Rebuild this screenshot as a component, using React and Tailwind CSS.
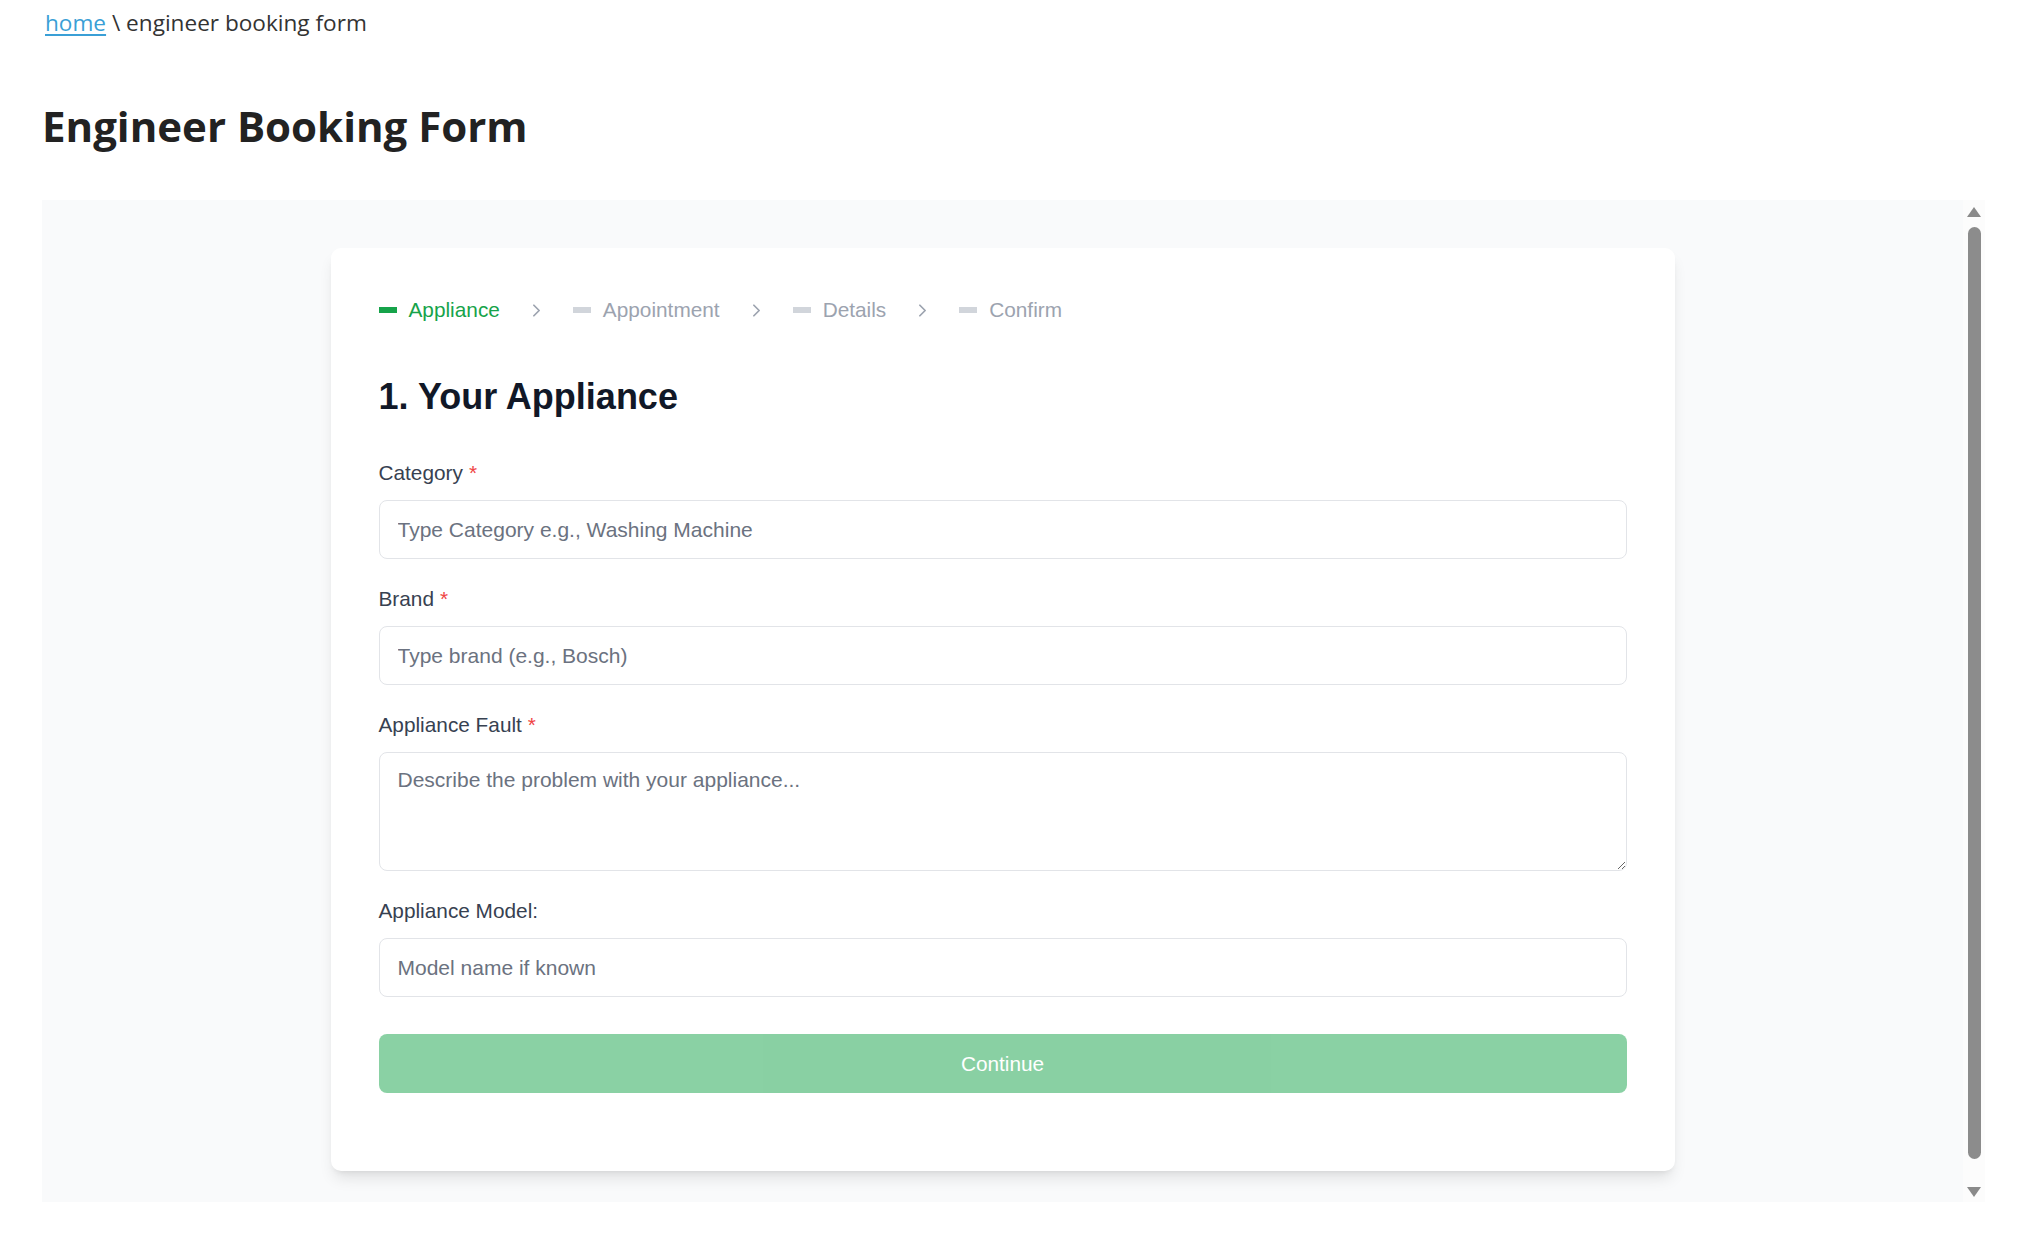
import React from "react";

function Chevron() {
  return (
    <svg width="21" height="21" viewBox="0 0 24 24" fill="none" stroke="#9ca3af" strokeWidth="2" strokeLinecap="round" strokeLinejoin="round">
      <path d="m9 18 6-6-6-6" />
    </svg>
  );
}

function Step({ label, active }) {
  return (
    <div className="flex items-center gap-[12px]">
      <span className={active ? "block w-[18px] h-[6px] bg-[#16a34a]" : "block w-[18px] h-[6px] bg-[#d1d5db]"} />
      <span className={active ? "text-[#16a34a]" : "text-[#9ca3af]"}>{label}</span>
    </div>
  );
}

function Label({ children, required }) {
  return (
    <label className="block text-[20.8px] leading-[31px] text-[#374151] mb-[12px]">
      {children}
      {required && <span className="text-[#ef4444] ml-[6px]">*</span>}
    </label>
  );
}

const inputCls =
  "block w-full h-[59px] rounded-[8px] border border-[#e2e4e8] bg-white px-[18px] text-[21px] text-[#111827] placeholder:text-[#6b7280] outline-none";

export default function App() {
  return (
    <div className="min-h-screen bg-white">
      <div className="pl-[45px] pt-[8px] text-[22.6px] leading-[30px] text-[#333333]" style={{ fontFamily: '"Open Sans", sans-serif' }}>
        <a href="#" className="text-[#3a9fd6] underline underline-offset-[3px]">home</a>
        <span> \ engineer booking form</span>
      </div>
      <h1 className="pl-[42px] mt-[64px] text-[42px] leading-[48px] font-bold text-[#222222]" style={{ fontFamily: '"Open Sans", sans-serif' }}>
        Engineer Booking Form
      </h1>

      <div className="ml-[42px] mt-[50px] w-[1943px] h-[1002px] flex overflow-hidden">
        <div className="flex-1 bg-[#f9fafb] pt-[48px]" style={{ fontFamily: '"Liberation Sans", Arial, sans-serif' }}>
          <div className="mx-auto w-[1344px] bg-white rounded-[10px] shadow-lg px-[48px] pt-[48px] pb-[78px]">
            <div className="flex items-center h-[28px] text-[20.8px] gap-[26px]">
              <Step label="Appliance" active />
              <Chevron />
              <Step label="Appointment" />
              <Chevron />
              <Step label="Details" />
              <Chevron />
              <Step label="Confirm" />
            </div>

            <h2 className="mt-[52px] text-[36px] leading-[42px] font-bold text-[#111827]">1. Your Appliance</h2>

            <form className="mt-[39px] flex flex-col gap-[24px]" onSubmit={(e) => e.preventDefault()}>
              <div>
                <Label required>Category</Label>
                <input className={inputCls} placeholder="Type Category e.g., Washing Machine" />
              </div>
              <div>
                <Label required>Brand</Label>
                <input className={inputCls} placeholder="Type brand (e.g., Bosch)" />
              </div>
              <div>
                <Label required>Appliance Fault</Label>
                <textarea
                  className="block w-full h-[119px] rounded-[8px] border border-[#e2e4e8] bg-white px-[18px] pt-[13px] text-[21px] leading-[27px] text-[#111827] placeholder:text-[#6b7280] outline-none resize-y"
                  placeholder="Describe the problem with your appliance..."
                />
              </div>
              <div>
                <Label>Appliance Model:</Label>
                <input className={inputCls} placeholder="Model name if known" />
              </div>
              <button
                type="submit"
                disabled
                className="mt-[13px] h-[59px] w-full rounded-[8px] bg-[#16a34a] opacity-50 text-white text-[20.8px] font-medium"
              >
                Continue
              </button>
            </form>
          </div>
        </div>
        <div className="w-[22px] bg-[#fcfcfc] flex flex-col items-center pt-[7px] pb-[5px]">
          <svg width="14" height="10" viewBox="0 0 14 10">
            <path d="M7 0 L14 10 L0 10 Z" fill="#8a8a8a" />
          </svg>
          <div className="mt-[10px] w-[13px] flex-1 rounded-full bg-[#8c8c8c] mb-[28px]" />
          <svg width="14" height="10" viewBox="0 0 14 10">
            <path d="M0 0 L14 0 L7 10 Z" fill="#8a8a8a" />
          </svg>
        </div>
      </div>
    </div>
  );
}
